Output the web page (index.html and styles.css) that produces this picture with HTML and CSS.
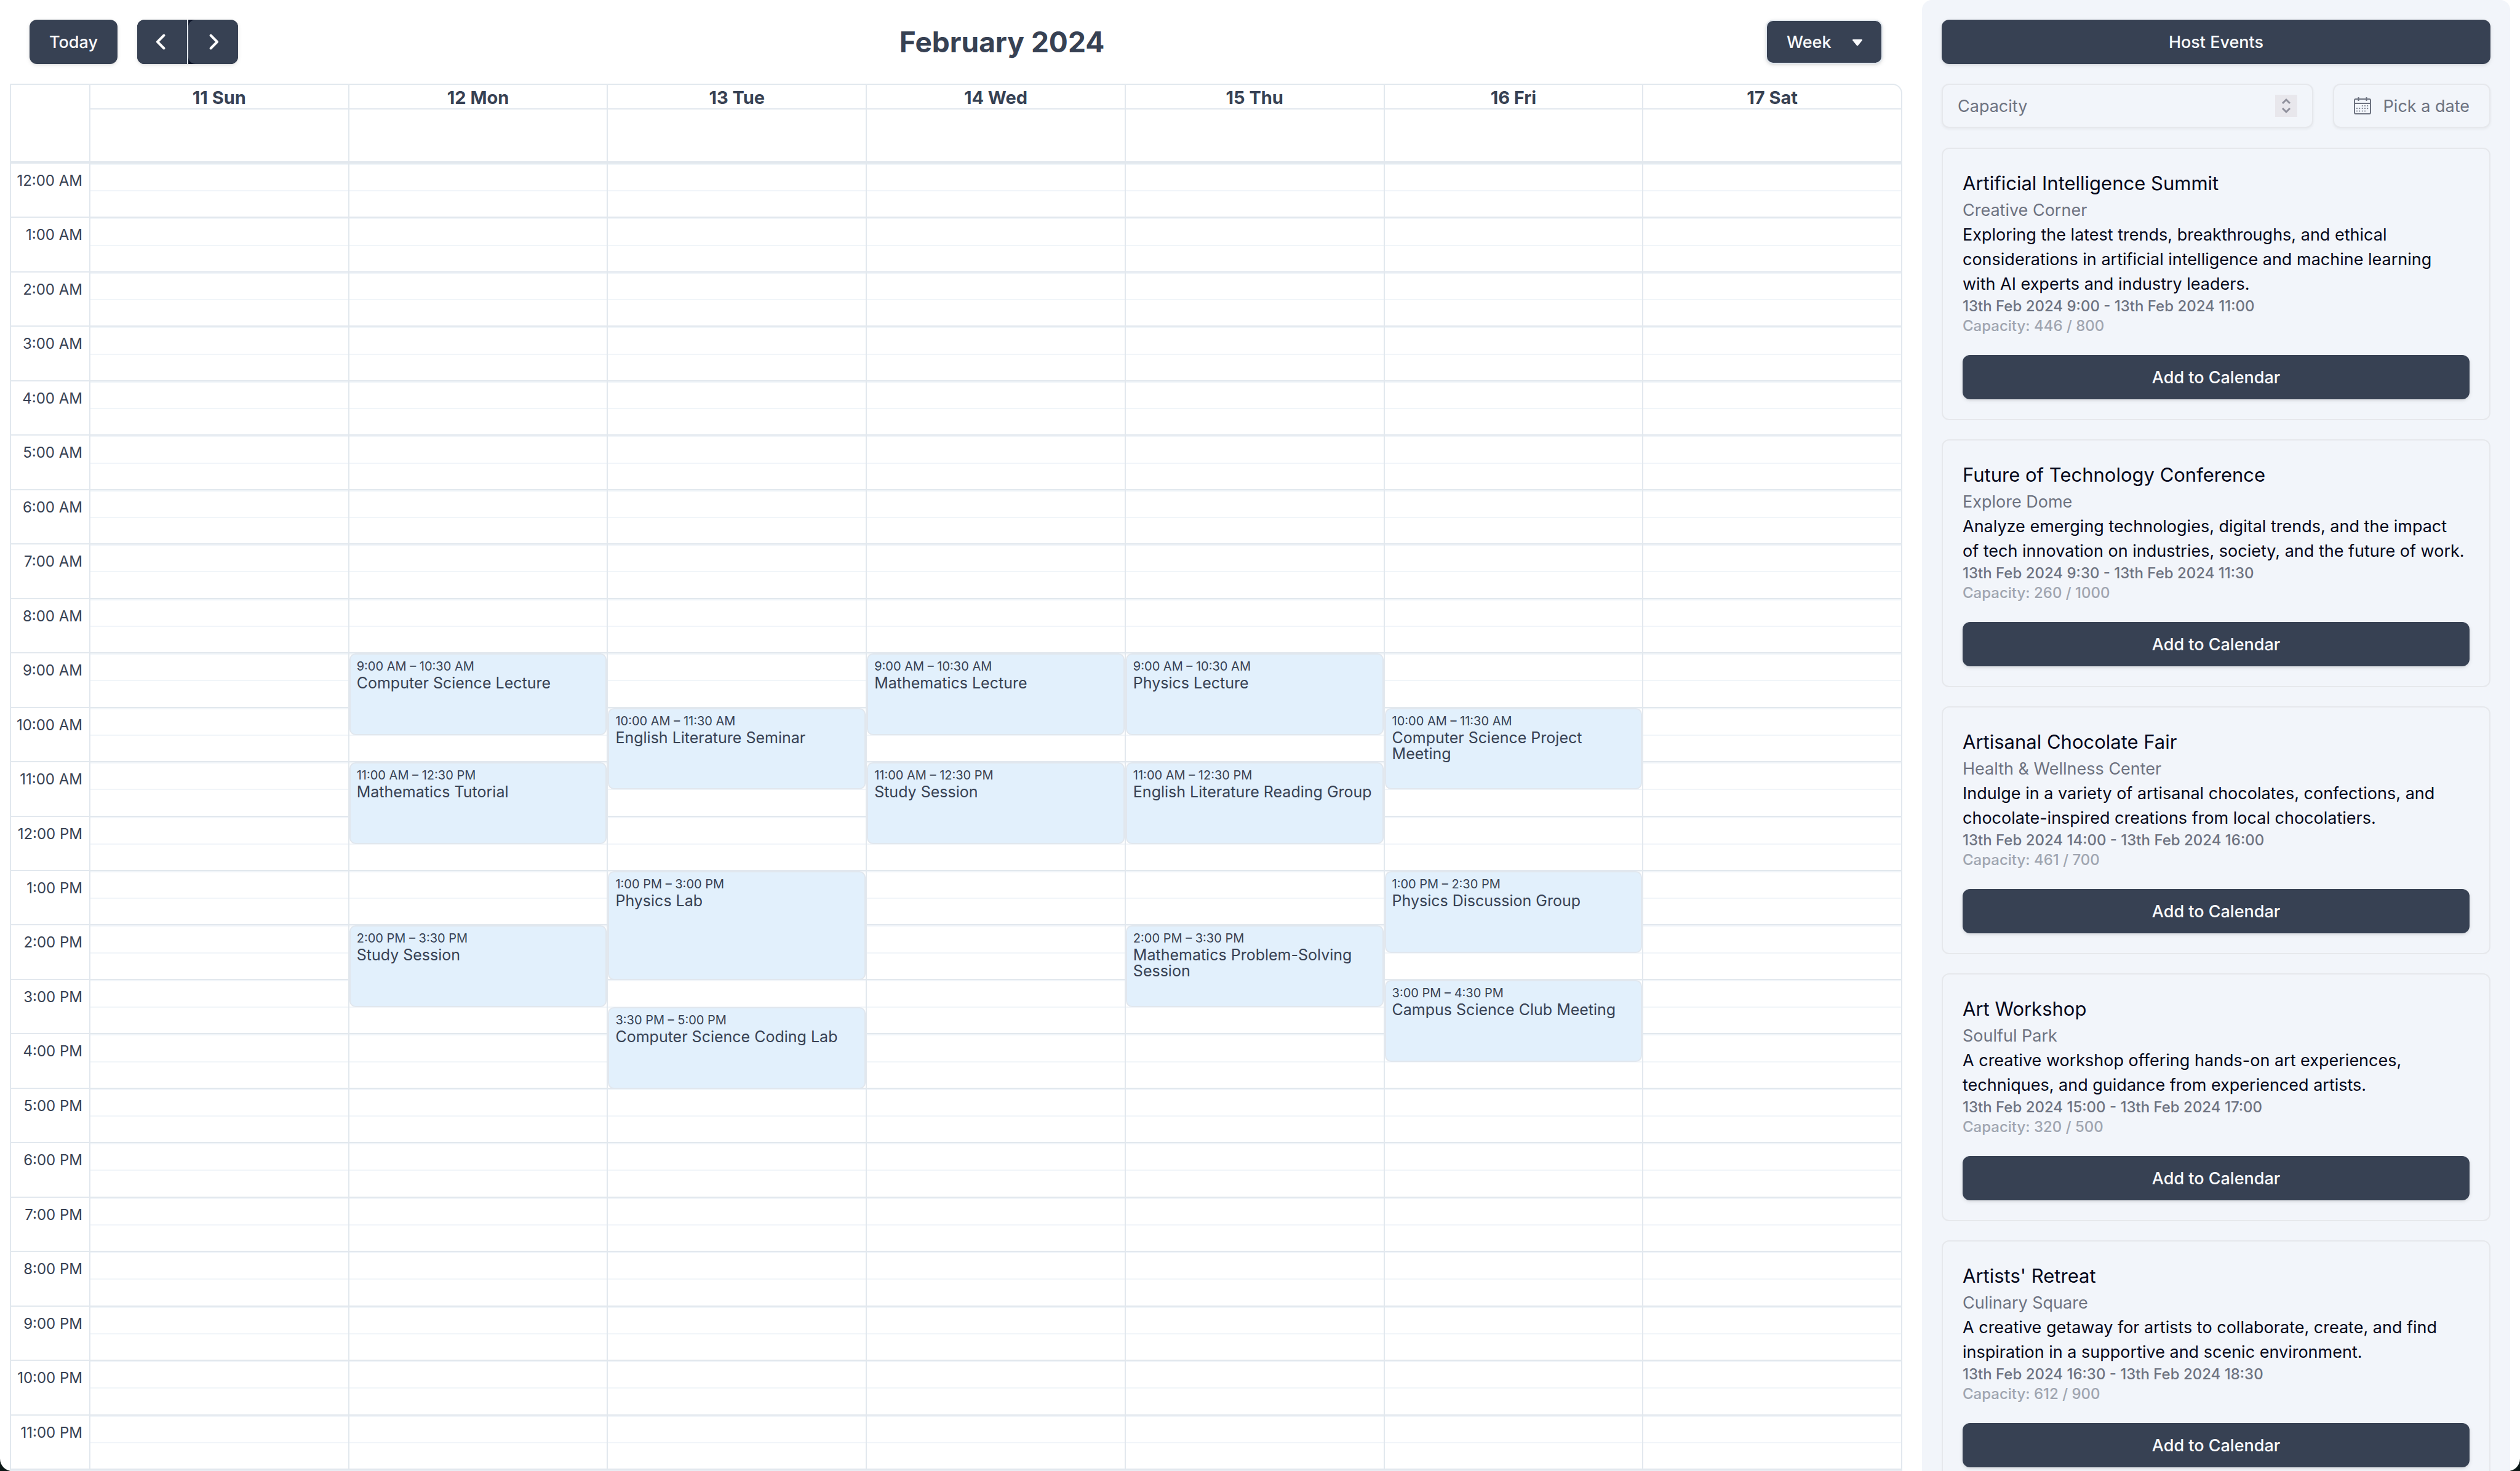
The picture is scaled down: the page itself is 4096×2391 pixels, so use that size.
FILE: index.html
```
<!DOCTYPE html>
<html lang="en">
<head>
<meta charset="utf-8">
<meta name="viewport" content="width=device-width, initial-scale=1">
<title>Calendar</title>
<link rel="stylesheet" href="styles.css">
</head>
<body>
<div class="app">
  <main class="calendar">
    <header class="toolbar">
      <div class="nav">
        <button type="button" class="btn">Today</button>
        <div class="pager">
          <button type="button" class="prev" aria-label="Previous week"><svg viewBox="0 0 28 28"><path d="M17.4 3.5 7 14l10.4 10.5"/></svg></button>
          <button type="button" class="next" aria-label="Next week"><svg viewBox="0 0 28 28"><path d="M10.6 3.5 21 14 10.6 24.5"/></svg></button>
        </div>
      </div>
      <h1>February 2024</h1>
      <div class="view">
        <select aria-label="View"><option>Week</option><option>Day</option><option>Month</option></select>
        <svg class="caret" viewBox="0 0 18 11"><path d="M2 1h14L9 9.500z"/></svg>
      </div>
    </header>

    <section class="week">
      <div class="heads">
        <div class="corner"></div>
        <div class="head"><h2>11 Sun</h2></div>
        <div class="head"><h2>12 Mon</h2></div>
        <div class="head"><h2>13 Tue</h2></div>
        <div class="head"><h2>14 Wed</h2></div>
        <div class="head"><h2>15 Thu</h2></div>
        <div class="head"><h2>16 Fri</h2></div>
        <div class="head"><h2>17 Sat</h2></div>
      </div>
      <div class="board">
        <div class="hours">
          <div class="hour"><span>12:00 AM</span><i></i><i></i></div>
          <div class="hour"><span>1:00 AM</span><i></i><i></i></div>
          <div class="hour"><span>2:00 AM</span><i></i><i></i></div>
          <div class="hour"><span>3:00 AM</span><i></i><i></i></div>
          <div class="hour"><span>4:00 AM</span><i></i><i></i></div>
          <div class="hour"><span>5:00 AM</span><i></i><i></i></div>
          <div class="hour"><span>6:00 AM</span><i></i><i></i></div>
          <div class="hour"><span>7:00 AM</span><i></i><i></i></div>
          <div class="hour"><span>8:00 AM</span><i></i><i></i></div>
          <div class="hour"><span>9:00 AM</span><i></i><i></i></div>
          <div class="hour"><span>10:00 AM</span><i></i><i></i></div>
          <div class="hour"><span>11:00 AM</span><i></i><i></i></div>
          <div class="hour"><span>12:00 PM</span><i></i><i></i></div>
          <div class="hour"><span>1:00 PM</span><i></i><i></i></div>
          <div class="hour"><span>2:00 PM</span><i></i><i></i></div>
          <div class="hour"><span>3:00 PM</span><i></i><i></i></div>
          <div class="hour"><span>4:00 PM</span><i></i><i></i></div>
          <div class="hour"><span>5:00 PM</span><i></i><i></i></div>
          <div class="hour"><span>6:00 PM</span><i></i><i></i></div>
          <div class="hour"><span>7:00 PM</span><i></i><i></i></div>
          <div class="hour"><span>8:00 PM</span><i></i><i></i></div>
          <div class="hour"><span>9:00 PM</span><i></i><i></i></div>
          <div class="hour"><span>10:00 PM</span><i></i><i></i></div>
          <div class="hour"><span>11:00 PM</span><i></i><i></i></div>
        </div>
        <div class="days">
          <div class="day"></div>
          <div class="day">
            <article class="event" style="grid-row:19 / span 3"><time>9:00 AM – 10:30 AM</time><h3>Computer Science Lecture</h3></article>
            <article class="event" style="grid-row:23 / span 3"><time>11:00 AM – 12:30 PM</time><h3>Mathematics Tutorial</h3></article>
            <article class="event" style="grid-row:29 / span 3"><time>2:00 PM – 3:30 PM</time><h3>Study Session</h3></article>
          </div>
          <div class="day">
            <article class="event" style="grid-row:21 / span 3"><time>10:00 AM – 11:30 AM</time><h3>English Literature Seminar</h3></article>
            <article class="event" style="grid-row:27 / span 4"><time>1:00 PM – 3:00 PM</time><h3>Physics Lab</h3></article>
            <article class="event" style="grid-row:32 / span 3"><time>3:30 PM – 5:00 PM</time><h3>Computer Science Coding Lab</h3></article>
          </div>
          <div class="day">
            <article class="event" style="grid-row:19 / span 3"><time>9:00 AM – 10:30 AM</time><h3>Mathematics Lecture</h3></article>
            <article class="event" style="grid-row:23 / span 3"><time>11:00 AM – 12:30 PM</time><h3>Study Session</h3></article>
          </div>
          <div class="day">
            <article class="event" style="grid-row:19 / span 3"><time>9:00 AM – 10:30 AM</time><h3>Physics Lecture</h3></article>
            <article class="event" style="grid-row:23 / span 3"><time>11:00 AM – 12:30 PM</time><h3>English Literature Reading Group</h3></article>
            <article class="event" style="grid-row:29 / span 3"><time>2:00 PM – 3:30 PM</time><h3>Mathematics Problem-Solving Session</h3></article>
          </div>
          <div class="day">
            <article class="event" style="grid-row:21 / span 3"><time>10:00 AM – 11:30 AM</time><h3>Computer Science Project Meeting</h3></article>
            <article class="event" style="grid-row:27 / span 3"><time>1:00 PM – 2:30 PM</time><h3>Physics Discussion Group</h3></article>
            <article class="event" style="grid-row:31 / span 3"><time>3:00 PM – 4:30 PM</time><h3>Campus Science Club Meeting</h3></article>
          </div>
          <div class="day"></div>
        </div>
      </div>
    </section>
  </main>

  <aside class="sidebar">
    <button type="button" class="btn">Host Events</button>
    <div class="filters">
      <div class="capacity">
        <input type="number" placeholder="Capacity" aria-label="Capacity">
        <svg class="stepper" viewBox="0 0 36 36"><path d="m12 14 6-6 6 6M12 22l6 6 6-6"/></svg>
      </div>
      <button type="button" class="pick">
        <svg viewBox="0 0 28 28">
          <rect x="1" y="3" width="26" height="24" rx="2"/>
          <path d="M1 10h26M7.500 0v6M20.500 0v6"/>
          <path class="dots" d="M13.700 14h0M18 14h0M22.300 14h0M5 18.300h0M9.300 18.300h0M13.700 18.300h0M18 18.300h0M22.300 18.300h0M5 22.600h0M9.300 22.600h0M13.700 22.600h0M18 22.600h0"/>
        </svg>
        Pick a date
      </button>
    </div>
    <div class="cards">
      <article class="card">
        <h2>Artificial Intelligence Summit</h2>
        <p class="venue">Creative Corner</p>
        <p class="about">Exploring the latest trends, breakthroughs, and ethical considerations in artificial intelligence and machine learning with AI experts and industry leaders.</p>
        <p class="when">13th Feb 2024 9:00 - 13th Feb 2024 11:00</p>
        <p class="seats">Capacity: 446 / 800</p>
        <button type="button" class="btn">Add to Calendar</button>
      </article>
      <article class="card">
        <h2>Future of Technology Conference</h2>
        <p class="venue">Explore Dome</p>
        <p class="about">Analyze emerging technologies, digital trends, and the impact of tech innovation on industries, society, and the future of work.</p>
        <p class="when">13th Feb 2024 9:30 - 13th Feb 2024 11:30</p>
        <p class="seats">Capacity: 260 / 1000</p>
        <button type="button" class="btn">Add to Calendar</button>
      </article>
      <article class="card">
        <h2>Artisanal Chocolate Fair</h2>
        <p class="venue">Health &amp; Wellness Center</p>
        <p class="about">Indulge in a variety of artisanal chocolates, confections, and chocolate-inspired creations from local chocolatiers.</p>
        <p class="when">13th Feb 2024 14:00 - 13th Feb 2024 16:00</p>
        <p class="seats">Capacity: 461 / 700</p>
        <button type="button" class="btn">Add to Calendar</button>
      </article>
      <article class="card">
        <h2>Art Workshop</h2>
        <p class="venue">Soulful Park</p>
        <p class="about">A creative workshop offering hands-on art experiences, techniques, and guidance from experienced artists.</p>
        <p class="when">13th Feb 2024 15:00 - 13th Feb 2024 17:00</p>
        <p class="seats">Capacity: 320 / 500</p>
        <button type="button" class="btn">Add to Calendar</button>
      </article>
      <article class="card">
        <h2>Artists' Retreat</h2>
        <p class="venue">Culinary Square</p>
        <p class="about">A creative getaway for artists to collaborate, create, and find inspiration in a supportive and scenic environment.</p>
        <p class="when">13th Feb 2024 16:30 - 13th Feb 2024 18:30</p>
        <p class="seats">Capacity: 612 / 900</p>
        <button type="button" class="btn">Add to Calendar</button>
      </article>
    </div>
  </aside>
</div>
</body>
</html>
```
FILE: styles.css
```
:root {
  --ink: #374153;
  --line: #e2e8ee;
  --faint: #f1f5f9;
  --edge: #e6e8ec;
  --panel: #f2f5fa;
  --muted: #6d7280;
  --shadow: 0 2px 6px rgba(0, 0, 0, .1), 0 2px 4px -2px rgba(0, 0, 0, .1);
  --axis: 127px;
}

* { box-sizing: border-box; margin: 0; }

html { background: #0c1716; }

body, button, input, select {
  font-family: Inter, "Liberation Sans", sans-serif;
}

svg { flex: none; fill: none; stroke: currentColor; }

.app {
  display: grid;
  grid-template-columns: minmax(0, 1fr) 956px;
  gap: 32px;
  height: 100vh;
  padding: 0 16px;
  overflow: hidden;
  background: #fff;
  border-radius: 0 0 20px 20px;
}

.btn {
  height: 72px;
  padding: 0 32px;
  border: 0;
  border-radius: 12px;
  background: var(--ink);
  box-shadow: var(--shadow);
  color: #f9fafc;
  font-size: 27px;
  font-weight: 500;
}

/* Calendar */
.calendar {
  display: flex;
  flex-direction: column;
  min-height: 0;
  color: var(--ink);
}

.toolbar {
  display: flex;
  align-items: center;
  justify-content: space-between;
  padding: 32px;
}

.toolbar h1 { font-size: 46px; line-height: 72px; }

.nav { display: flex; gap: 32px; }

.pager {
  display: flex;
  height: 72px;
  border-radius: 12px;
  overflow: hidden;
  background: #0f172a;
  box-shadow: var(--shadow);
}

.pager button {
  display: flex;
  align-items: center;
  justify-content: center;
  width: 81px;
  padding: 0;
  border: 0;
  background: var(--ink);
  color: #fff;
}

.pager .prev { width: 83px; border-right: 2px solid var(--line); }
.pager .next { border-radius: 12px; }

.pager svg {
  width: 28px;
  height: 28px;
  stroke-width: 4;
  stroke-linecap: round;
  stroke-linejoin: round;
}

.view { position: relative; }

.view select {
  display: block;
  appearance: none;
  width: 190px;
  height: 72px;
  padding: 0 32px;
  border: 2px solid var(--line);
  border-radius: 12px;
  background: var(--ink);
  box-shadow: var(--shadow);
  color: #f9fafc;
  font-size: 27px;
  font-weight: 500;
}

.caret {
  position: absolute;
  top: 32px;
  right: 32px;
  width: 18px;
  height: 11px;
  fill: #f9fafc;
  stroke: #f9fafc;
  stroke-width: 2;
  stroke-linejoin: round;
  pointer-events: none;
}

.week {
  flex: 1;
  display: flex;
  flex-direction: column;
  min-height: 0;
  border: 2px solid var(--line);
  border-bottom-color: #e8edf3;
  border-top-right-radius: 16px;
}

.heads {
  display: grid;
  grid-template-columns: var(--axis) repeat(7, minmax(0, 1fr));
  border-bottom: 4px solid var(--line);
}

.head {
  height: 124px;
  border-left: 2px solid var(--line);
}

.head h2 {
  height: 40px;
  padding-top: 4px;
  border-bottom: 2px solid var(--line);
  font-size: 29px;
  line-height: 34px;
  text-align: center;
}

.board {
  flex: 1;
  display: grid;
  min-height: 0;
}

.hours, .days { grid-area: 1 / 1; display: grid; min-height: 0; }

.hours { grid-template-rows: repeat(24, minmax(0, 1fr)); }

.hour {
  display: grid;
  grid-template-columns: var(--axis) minmax(0, 1fr);
  grid-template-rows: repeat(2, minmax(0, 1fr));
  border-bottom: 2px solid var(--line);
}

.hour span {
  grid-row: span 2;
  padding: 12px 11px 0 0;
  font-size: 24px;
  line-height: 32px;
  text-align: right;
}

.hour i { border-top: 2px solid var(--faint); }

.days {
  grid-template-columns: repeat(7, minmax(0, 1fr));
  margin-left: var(--axis);
}

.day {
  display: grid;
  grid-template-rows: repeat(48, minmax(0, 1fr));
  min-height: 0;
  border-left: 2px solid var(--line);
}

.event {
  padding: 5px 6px 0 10px;
  border: 2px solid #e1e7ee;
  border-radius: 10px;
  background: #e2f0fc;
}

.event time { display: block; font-size: 20px; line-height: 28px; }
.event h3 { font-size: 25px; font-weight: 400; line-height: 26px; }

/* Sidebar */
.sidebar {
  display: flex;
  flex-direction: column;
  gap: 32px;
  min-height: 0;
  padding: 32px;
  overflow: hidden;
  background: var(--panel);
  border-radius: 16px 16px 0 0;
}

.sidebar > * { flex: none; }

.filters { display: flex; gap: 32px; }

.capacity { position: relative; flex: 1; }

.capacity input, .pick {
  height: 72px;
  border: 2px solid var(--edge);
  border-radius: 12px;
  background: var(--panel);
  box-shadow: 0 2px 4px rgba(0, 0, 0, .05);
  color: var(--muted);
  font-size: 27px;
}

.capacity input {
  display: block;
  width: 100%;
  padding: 0 24px;
  appearance: textfield;
}

.capacity input::placeholder { color: var(--muted); opacity: 1; }

.stepper {
  position: absolute;
  top: 18px;
  right: 26px;
  width: 36px;
  height: 36px;
  background: #e8e7ec;
  color: #8f909c;
  stroke-width: 3;
  pointer-events: none;
}

.pick {
  display: flex;
  align-items: center;
  gap: 20px;
  padding: 0 32px;
}

.pick svg { width: 28px; height: 28px; stroke-width: 2; }
.pick .dots { stroke-linecap: round; }

.cards { display: grid; gap: 31px; }

.card {
  padding: 32px;
  border: 2px solid var(--edge);
  border-radius: 12px;
  color: #04071a;
}

.card h2 { font-size: 31px; font-weight: 400; line-height: 48px; }
.card p { font-size: 27px; line-height: 40px; }
.card .venue { color: var(--muted); }
.card .about { padding-right: 8px; }
.card .when, .card .seats { font-size: 24px; font-weight: 500; line-height: 32px; }
.card .when { color: var(--muted); }
.card .seats { color: #a0a5b0; }
.card .btn { width: 100%; margin-top: 31px; }
```
